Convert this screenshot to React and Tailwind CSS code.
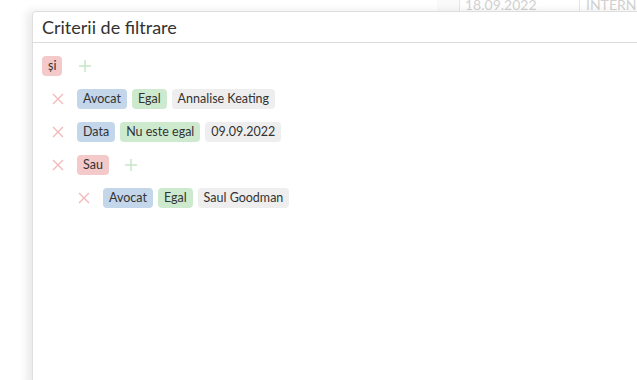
import React from "react";

const chip = {
  pink: "bg-[#f4c9c9]",
  blue: "bg-[#c3d6ea]",
  green: "bg-[#cdeacf]",
  gray: "bg-[#eeeeee]",
};

function Chip({ c, children }) {
  return (
    <span className={`${chip[c]} h-[20px] px-[6px] rounded-[4px] text-[12.5px] leading-[20px] text-[#333] whitespace-nowrap`}>
      {children}
    </span>
  );
}

function X() {
  return (
    <svg width="12" height="12" viewBox="0 0 12 12" className="shrink-0">
      <path d="M1 1L11 11M11 1L1 11" stroke="#f2b8b8" strokeWidth="1.3" />
    </svg>
  );
}

function Plus() {
  return (
    <svg width="12" height="12" viewBox="0 0 12 12" className="shrink-0">
      <path d="M6 0V12M0 6H12" stroke="#c6e6c8" strokeWidth="1.5" />
    </svg>
  );
}

export default function App() {
  return (
    <div
      className="relative w-[637px] h-[380px] bg-white overflow-hidden"
      style={{ fontFamily: 'Lato, "Noto Sans", sans-serif' }}
    >
      {/* background table row */}
      <div className="absolute left-0 right-0 top-[-6px] h-[17px] flex text-[14px] text-[#d2d2d2]">
        <div className="w-[437px]" />
        <div className="w-[22px] bg-[#fafafa]" />
        <div className="w-[120px] border-l border-[#e6e6e6] pl-[5px]">18.09.2022</div>
        <div className="flex-1 border-l border-[#e6e6e6] pl-[6px]">INTERN</div>
      </div>

      {/* filter panel */}
      <div className="absolute left-[32px] top-[11px] right-[-8px] bottom-[-8px] bg-white border border-[#dedede] rounded-tl-[4px] shadow-[-5px_0_10px_rgba(0,0,0,0.09)] flex flex-col">
        <div className="h-[31px] border-b border-[#dcdcdc] px-[9px] flex items-center">
          <span className="text-[18px] text-[#333] leading-none">Criterii de filtrare</span>
        </div>
        <div className="pl-[9px] pt-[13px] flex flex-col gap-[13px]">
          <div className="flex items-center gap-[17px]">
            <Chip c="pink">și</Chip>
            <Plus />
          </div>
          <div className="flex items-center gap-[5px] pl-[10px]">
            <span className="w-[20px] flex"><X /></span>
            <Chip c="blue">Avocat</Chip>
            <Chip c="green">Egal</Chip>
            <Chip c="gray">Annalise Keating</Chip>
          </div>
          <div className="flex items-center gap-[5px] pl-[10px]">
            <span className="w-[20px] flex"><X /></span>
            <Chip c="blue">Data</Chip>
            <Chip c="green">Nu este egal</Chip>
            <Chip c="gray">09.09.2022</Chip>
          </div>
          <div className="flex items-center gap-[5px] pl-[10px]">
            <span className="w-[20px] flex"><X /></span>
            <Chip c="pink">Sau</Chip>
            <span className="pl-[11px] flex"><Plus /></span>
          </div>
          <div className="flex items-center gap-[5px] pl-[36px]">
            <span className="w-[20px] flex"><X /></span>
            <Chip c="blue">Avocat</Chip>
            <Chip c="green">Egal</Chip>
            <Chip c="gray">Saul Goodman</Chip>
          </div>
        </div>
      </div>
    </div>
  );
}
